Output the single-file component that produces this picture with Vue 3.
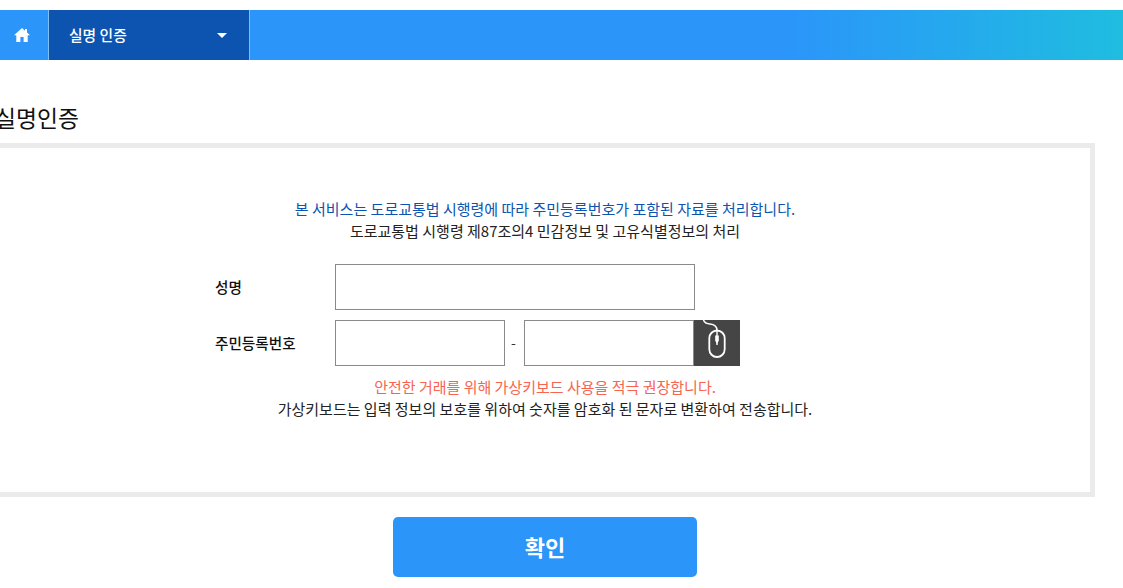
<script setup>
const title = '실명인증'
</script>

<template>
  <div class="page">
    <nav class="nav">
      <a class="home">
        <svg width="16" height="14" viewBox="0 0 16 14">
          <path fill="#fff" d="M8 0 L11 2.700 V1 H13 V4.500 L16 7.200 H13.700 V14 H9.600 V9 H6.400 V14 H2.300 V7.200 H0 Z" />
        </svg>
      </a>
      <div class="menu">
        <span>실명 인증</span>
        <i class="caret"></i>
      </div>
    </nav>
    <main class="main">
      <h2 class="title">{{ title }}</h2>
      <section class="box">
        <p class="lead blue">본 서비스는 도로교통법 시행령에 따라 주민등록번호가 포함된 자료를 처리합니다.</p>
        <p class="lead dark">도로교통법 시행령 제87조의4 민감정보 및 고유식별정보의 처리</p>
        <div class="form">
          <div class="row">
            <label>성명</label>
            <input class="inp wide" type="text" />
          </div>
          <div class="row">
            <label>주민등록번호</label>
            <input class="inp short" type="text" />
            <span class="dash">-</span>
            <input class="inp short" type="text" />
            <button class="mouse" type="button">
              <svg width="46" height="46" viewBox="0 0 46 46" fill="none" stroke="#fff">
                <path stroke-width="1.5" d="M9.500 0 C10.500 3 12.500 3.700 16 4 C20 4.400 23 6 23 10.500" />
                <rect x="15.300" y="10.500" width="15.400" height="26.500" rx="7.700" stroke-width="1.800" />
                <path stroke-width="1.400" d="M23 11 V25" />
                <path fill="#fff" stroke="none" d="M21.200 15.500 H24.800 V20.500 L23 24 L21.200 20.500 Z" />
              </svg>
            </button>
          </div>
        </div>
        <p class="note red">안전한 거래를 위해 가상키보드 사용을 적극 권장합니다.</p>
        <p class="note dark">가상키보드는 입력 정보의 보호를 위하여 숫자를 암호화 된 문자로 변환하여 전송합니다.</p>
      </section>
      <div class="actions">
        <button class="ok" type="button">확인</button>
      </div>
    </main>
  </div>
</template>

<style scoped>
.page {
  width: 1123px;
  height: 588px;
  overflow: hidden;
  padding-top: 10px;
  box-sizing: border-box;
  background: #fff;
  font-family: "Noto Sans CJK KR", "Liberation Sans", sans-serif;
  color: #222;
}
.nav {
  display: flex;
  height: 50px;
  background: linear-gradient(90deg, #2b95fa 0%, #2b95fa 70%, #1fbde0 100%);
}
.home {
  width: 43px;
  padding-right: 5px;
  display: flex;
  align-items: center;
  justify-content: center;
  border-right: 1px solid #7fc0fb;
}
.menu {
  width: 201px;
  background: #0d54b0;
  border-right: 1px solid #7fc0fb;
  color: #fff;
  display: flex;
  align-items: center;
  justify-content: space-between;
  padding: 0 22px 2px 20px;
  box-sizing: border-box;
  font-size: 14.800px;
  font-weight: 500;
}
.caret {
  width: 0;
  height: 0;
  margin-top: 2px;
  border-left: 5px solid transparent;
  border-right: 5px solid transparent;
  border-top: 5px solid #fff;
}
.main {
  width: 1100px;
  margin-left: -5px;
}
.title {
  margin: 0;
  padding-top: 42px;
  font-size: 22.800px;
  line-height: 32px;
  height: 33px;
  font-weight: 400;
  color: #111;
}
.box {
  margin-top: 8px;
  height: 354px;
  box-sizing: border-box;
  border: 5px solid #ebebeb;
  padding-top: 50px;
  text-align: center;
}
p {
  margin: 0;
  font-size: 15px;
  line-height: 22px;
}
.blue { color: #0d54b0; }
.dark { color: #222; }
.red { color: #f7644f; }
.form {
  margin: 22px 0 10px 215px;
  display: flex;
  flex-direction: column;
  gap: 10px;
  text-align: left;
}
.row {
  display: flex;
  align-items: center;
  height: 46px;
}
label {
  width: 120px;
  font-size: 14.600px;
  line-height: 46px;
  height: 46px;
  font-weight: 500;
  color: #111;
}
.inp {
  height: 46px;
  box-sizing: border-box;
  border: 1px solid #8a8a8a;
  background: #fff;
  padding: 0 8px;
  outline: none;
  margin: 0;
}
.wide { width: 360px; }
.short { width: 170px; }
.dash {
  width: 19px;
  text-align: center;
  font-size: 14px;
  color: #333;
  margin-left: -1px;
  padding-right: 1px;
  margin-top: -2px;
}
.mouse {
  width: 46px;
  height: 46px;
  margin: 0;
  padding: 0;
  border: 0;
  background: #454545;
  display: block;
}
.mouse svg { display: block; }
.actions {
  margin-top: 20px;
  display: flex;
  justify-content: center;
}
.ok {
  width: 304px;
  height: 60px;
  border: 0;
  border-radius: 5px;
  background: #2b95fa;
  color: #fff;
  font-family: inherit;
  font-size: 22px;
  font-weight: 700;
  padding: 0 0 3px;
}
</style>
